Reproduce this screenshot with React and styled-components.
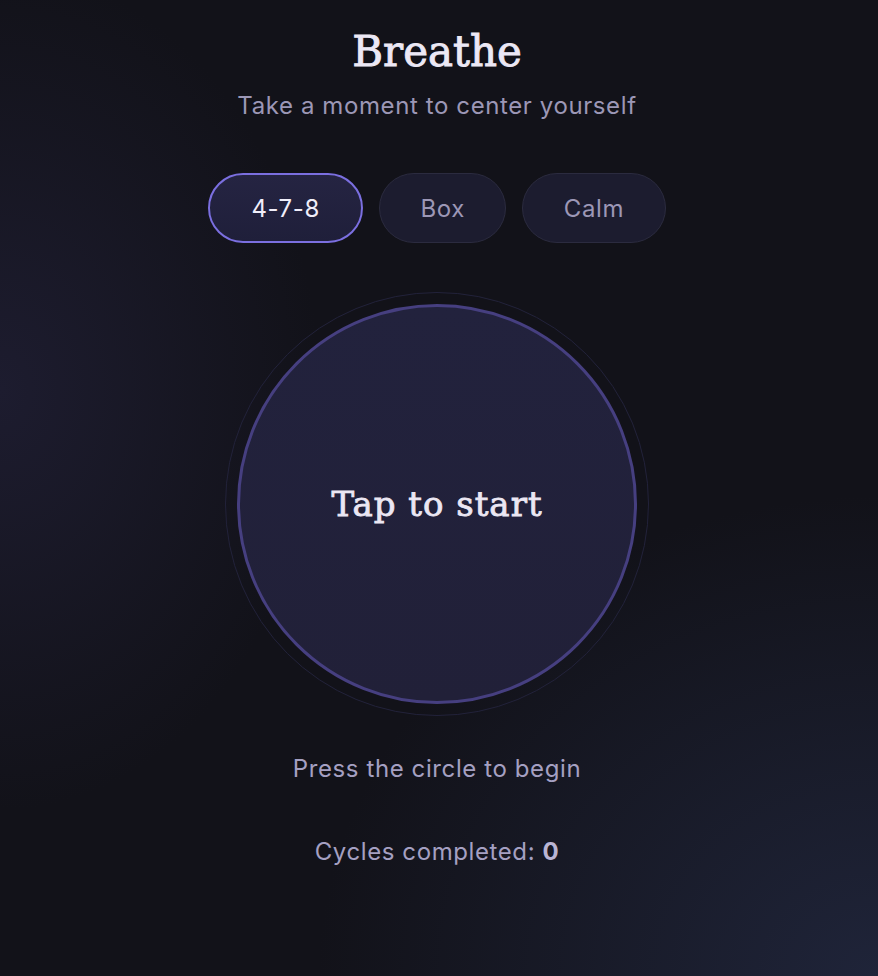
import React, { useState } from "react";
import styled, { createGlobalStyle } from "styled-components";

const GlobalStyle = createGlobalStyle`
  html, body {
    margin: 0;
    padding: 0;
  }
  body {
    background: #121219;
    font-family: "Inter", "Liberation Sans", sans-serif;
  }
`;

const Page = styled.main`
  min-height: 100vh;
  box-sizing: border-box;
  display: flex;
  flex-direction: column;
  align-items: center;
  padding: 23px 4px 0 0;
  background:
    radial-gradient(ellipse 560px 480px at 100% 100%, #1f2439 0%, rgba(31, 36, 57, 0) 100%),
    radial-gradient(ellipse 320px 420px at 0% 40%, #1d1c2f 0%, rgba(29, 28, 47, 0) 100%),
    #121219;
`;

const Title = styled.h1`
  margin: 0;
  font-family: "DejaVu Serif", "Liberation Serif", serif;
  font-weight: 400;
  font-size: 42px;
  line-height: 58px;
  color: #ece8f5;
  -webkit-text-stroke: 0.9px #ece8f5;
`;

const Subtitle = styled.p`
  margin: 10px 0 0;
  font-size: 24px;
  line-height: 30px;
  letter-spacing: 0.6px;
  color: #9c97b6;
`;

const PatternRow = styled.div`
  display: flex;
  gap: 16px;
  margin-top: 52px;
`;

const PatternButton = styled.button`
  height: 70px;
  padding: 0 ${(p) => (p.$active ? 41 : 40.5)}px;
  border-radius: 35px;
  box-sizing: border-box;
  font-family: inherit;
  font-size: 24px;
  letter-spacing: 0.6px;
  cursor: pointer;
  color: ${(p) => (p.$active ? "#f0eefa" : "#9c97b6")};
  background: ${(p) =>
    p.$active
      ? "linear-gradient(180deg, #252442 0%, #1f1f3a 100%)"
      : "#1c1c2f"};
  border: ${(p) => (p.$active ? "2px solid #7b6fe0" : "1.5px solid #2b2b3f")};
`;

const Ring = styled.div`
  margin-top: 49px;
  width: 424px;
  height: 424px;
  box-sizing: border-box;
  border-radius: 50%;
  border: 1px solid #22223a;
  padding: 11px;
`;

const Orb = styled.button`
  width: 100%;
  height: 100%;
  box-sizing: border-box;
  border-radius: 50%;
  border: 3px solid #463f80;
  background: linear-gradient(180deg, #22223d 0%, #212038 100%);
  display: flex;
  align-items: center;
  justify-content: center;
  cursor: pointer;
  font-family: "DejaVu Serif", "Liberation Serif", serif;
  font-weight: 400;
  font-size: 34px;
  letter-spacing: 1px;
  color: #ebe7f3;
  -webkit-text-stroke: 0.8px #ebe7f3;
`;

const Hint = styled.p`
  margin: 38px 0 0;
  font-size: 24px;
  line-height: 30px;
  letter-spacing: 0.6px;
  color: #a5a0c2;
`;

const Cycles = styled.p`
  margin: 53px 0 0;
  font-size: 24px;
  line-height: 30px;
  letter-spacing: 0.6px;
  color: #a5a0c2;

  strong {
    font-weight: 700;
    color: #bab5d4;
  }
`;

const patterns = ["4-7-8", "Box", "Calm"];

export default function App() {
  const [active, setActive] = useState("4-7-8");
  return (
    <>
      <GlobalStyle />
      <Page>
        <Title>Breathe</Title>
        <Subtitle>Take a moment to center yourself</Subtitle>
        <PatternRow>
          {patterns.map((name) => (
            <PatternButton
              key={name}
              $active={active === name}
              onClick={() => setActive(name)}
            >
              {name}
            </PatternButton>
          ))}
        </PatternRow>
        <Ring>
          <Orb>Tap to start</Orb>
        </Ring>
        <Hint>Press the circle to begin</Hint>
        <Cycles>
          Cycles completed: <strong>0</strong>
        </Cycles>
      </Page>
    </>
  );
}
